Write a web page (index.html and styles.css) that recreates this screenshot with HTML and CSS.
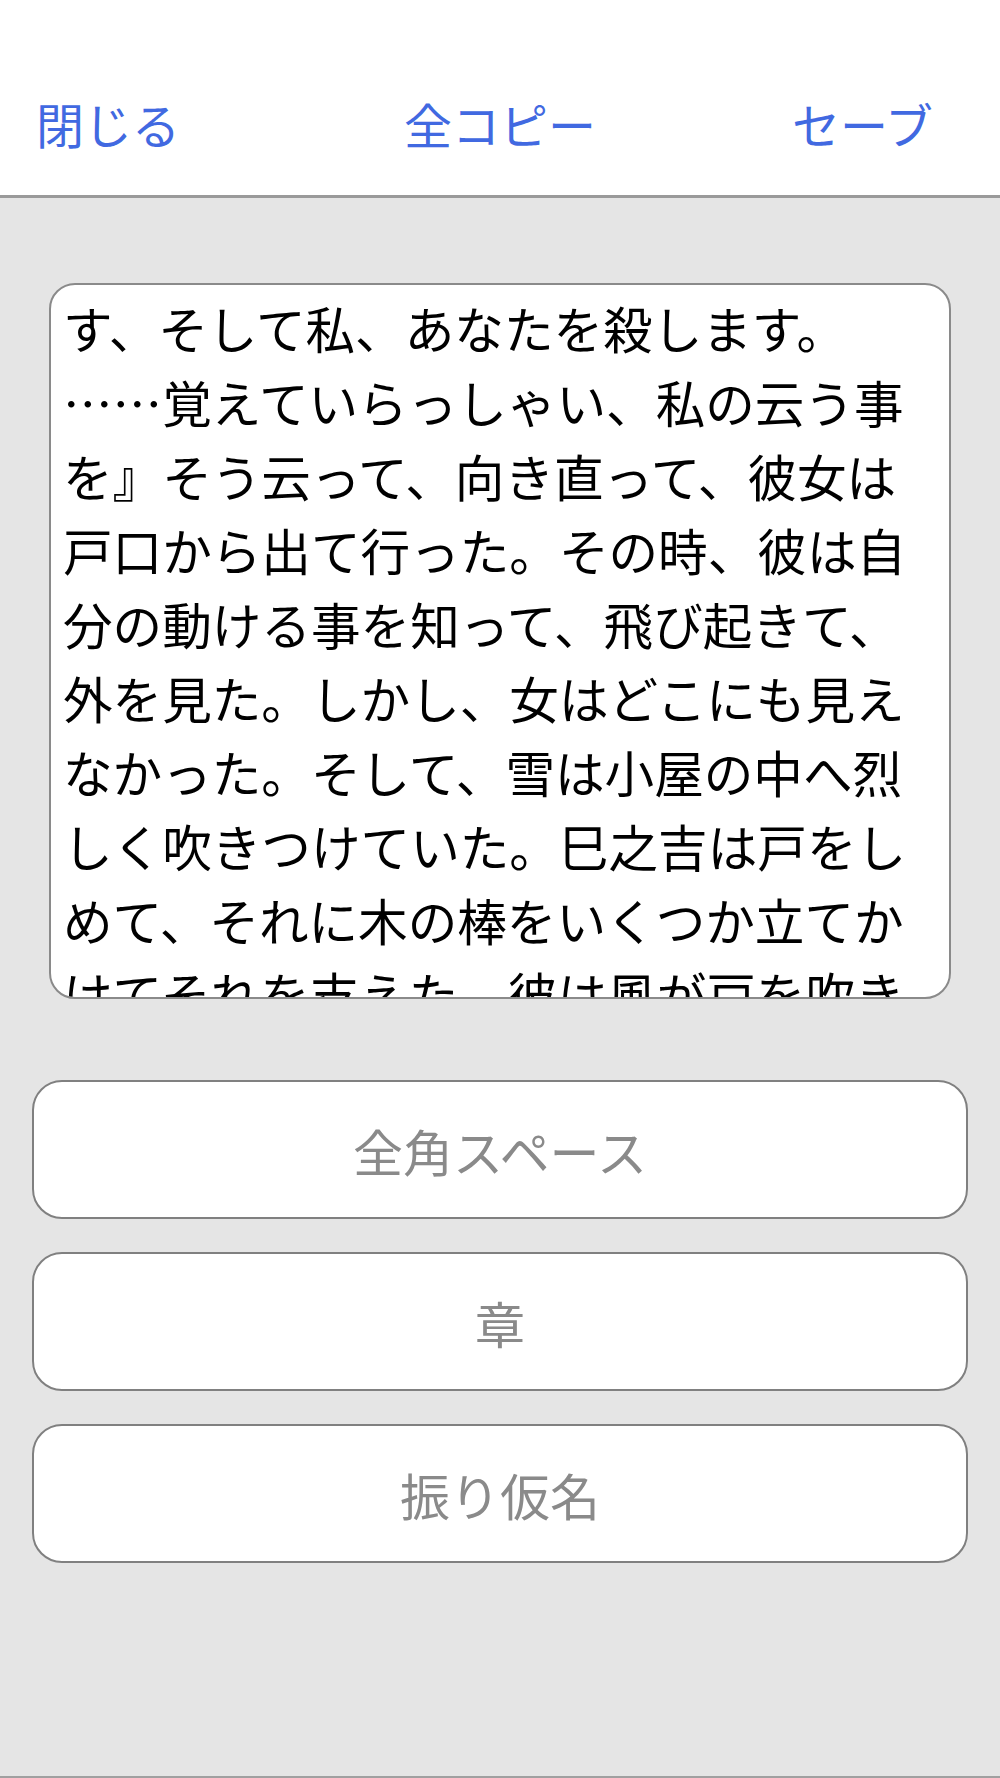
FILE: index.html
```html
<!DOCTYPE html>
<html lang="ja">
<head>
<meta charset="utf-8">
<title>編集</title>
<link rel="stylesheet" href="styles.css">
</head>
<body>
<div class="screen">
  <header class="topbar">
    <span class="nav-btn nav-left">閉じる</span>
    <span class="nav-btn nav-center">全コピー</span>
    <span class="nav-btn nav-right">セーブ</span>
  </header>
  <main class="content">
    <div class="editor">
      <div class="editor-text">す、そして私、あなたを殺します。<br>……覚えていらっしゃい、私の云う事<br>を』そう云って、向き直って、彼女は<br>戸口から出て行った。その時、彼は自<br>分の動ける事を知って、飛び起きて、<br>外を見た。しかし、女はどこにも見え<br>なかった。そして、雪は小屋の中へ烈<br>しく吹きつけていた。巳之吉は戸をし<br>めて、それに木の棒をいくつか立てか<br>けてそれを支えた。彼は風が戸を吹き<br>開けたのかと思った。</div>
    </div>
    <div class="actions">
      <button class="action-btn">全角スペース</button>
      <button class="action-btn">章</button>
      <button class="action-btn">振り仮名</button>
    </div>
  </main>
  <footer class="bottombar"></footer>
</div>
</body>
</html>
```

FILE: styles.css
```css
html, body {
  margin: 0;
  padding: 0;
}

body {
  background: #e5e5e5;
  font-family: "Noto Sans CJK JP", "Noto Sans", sans-serif;
}

.screen {
  height: 1778px;
  display: flex;
  flex-direction: column;
  box-sizing: border-box;
}

.topbar {
  height: 198px;
  box-sizing: border-box;
  background: #ffffff;
  border-bottom: 3px solid #9a9a9a;
  padding: 87px 36px 0 36px;
  display: grid;
  grid-template-columns: 1fr auto 1fr;
  align-items: start;
  flex: 0 0 auto;
}

.nav-btn {
  font-size: 48px;
  line-height: 72px;
  color: #4169e1;
  white-space: nowrap;
}

.nav-left { justify-self: start; }
.nav-center { justify-self: center; }
.nav-right { justify-self: end; margin-right: 31px; }

.content {
  flex: 1 1 auto;
  display: flex;
  flex-direction: column;
  padding-top: 85px;
}

.editor {
  margin: 0 49px 0 49px;
  height: 716px;
  box-sizing: border-box;
  background: #ffffff;
  border: 2px solid #8a8a8a;
  border-radius: 26px;
  overflow: hidden;
  padding: 5px 8px 0 12px;
}

.editor-text {
  font-size: 49.6px;
  line-height: 74px;
  color: #000000;
  white-space: nowrap;
}

.actions {
  margin: 81px 32px 0 32px;
  display: flex;
  flex-direction: column;
  gap: 33px;
}

.action-btn {
  height: 139px;
  box-sizing: border-box;
  background: #ffffff;
  border: 2px solid #808080;
  border-radius: 30px;
  font-family: "Noto Sans CJK JP", "Noto Sans", sans-serif;
  font-size: 50px;
  color: #8a8a8a;
  display: flex;
  align-items: center;
  justify-content: center;
  padding: 0;
}

.bottombar {
  height: 2px;
  background: #a0a0a0;
  flex: 0 0 auto;
}
```
